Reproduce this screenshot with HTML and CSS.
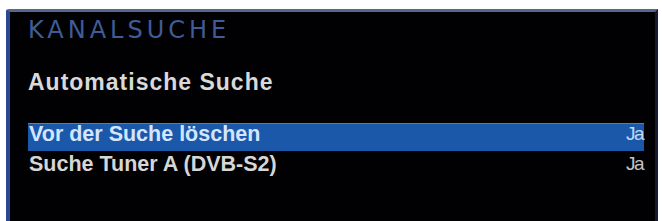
FILE: index.html
```html
<!DOCTYPE html>
<html lang="de">
<head>
    <meta charset="UTF-8">
    <title>Kanalsuche</title>
    <link rel="stylesheet" href="styles.css">
</head>
<body>
    <div class="screen">
        <div class="screen-title">KANALSUCHE</div>
        <div class="screen-subtitle">Automatische Suche</div>

        <!-- Optionen -->
        <div class="menu">
            <div class="menu-row active">
                <span class="menu-label">Vor der Suche löschen</span>
                <span class="menu-value">Ja</span>
            </div>
            <div class="menu-row">
                <span class="menu-label">Suche Tuner A (DVB-S2)</span>
                <span class="menu-value">Ja</span>
            </div>
        </div>
    </div>
</body>
</html>
```

FILE: styles.css
```css
body {
    margin: 0;
    background-color: #ffffff;
    font-family: "Liberation Sans", Arial, sans-serif;
    overflow: hidden;
}
.screen {
    margin: 9px 4px 0 6px;
    height: 204px;
    background-color: #010104;
    border-left: 4px solid #2b4793;
    border-top: 3px solid #56688e;
    border-right: 3px solid #151a36;
    border-top-left-radius: 3px;
    padding: 5px 11px 0 18px;
}
.screen-title {
    font-family: "DejaVu Sans", sans-serif;
    font-size: 24px;
    line-height: 26px;
    letter-spacing: 4px;
    color: #3f5c96;
}
.screen-subtitle {
    margin-top: 26px;
    font-size: 23px;
    line-height: 26px;
    font-weight: bold;
    letter-spacing: 1px;
    color: #d9d9d9;
}
.menu {
    margin-top: 28px;
}
.menu-row {
    display: flex;
    justify-content: space-between;
    height: 28px;
    margin-bottom: 2px;
    padding: 0 1px;
    box-sizing: border-box;
    line-height: 22px;
}
.menu-row.active {
    background-color: #1b58aa;
    border-top: 1px solid #4c80c2;
    line-height: 20px;
}
.menu-label {
    font-size: 21.5px;
    font-weight: bold;
    color: #d6d6d6;
}
.menu-value {
    font-size: 19px;
    letter-spacing: -1.5px;
    color: #c4c4c4;
}
.active .menu-label {
    color: #d4e6ff;
}
.active .menu-value {
    color: #c0d8f6;
}
```
